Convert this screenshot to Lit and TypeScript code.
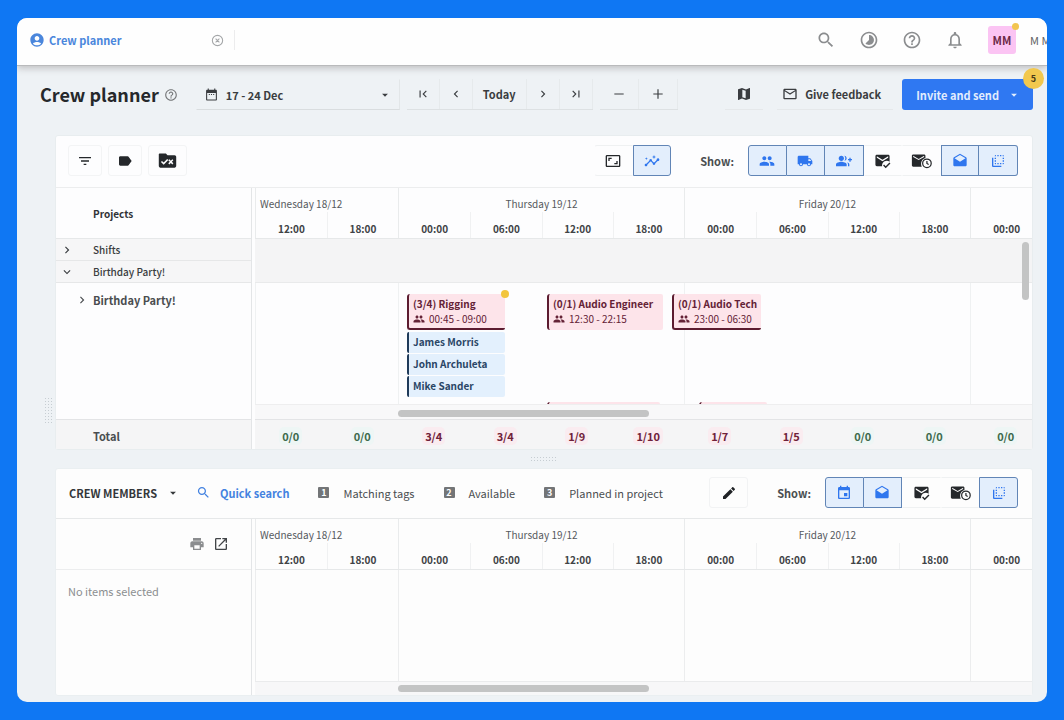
import { LitElement, html, css, svg, nothing } from "lit";
import { customElement, property, state } from "lit/decorators.js";
import { classMap } from "lit/directives/class-map.js";
import { styleMap } from "lit/directives/style-map.js";

/* 24-unit icon shapes, keyed by name */
const ICONS: Record<string, unknown> = {
  account: svg`<path d="M12 2C6.48 2 2 6.48 2 12s4.48 10 10 10 10-4.48 10-10S17.520 2 12 2zm0 4c1.930 0 3.500 1.570 3.500 3.500S13.930 13 12 13s-3.500-1.570-3.500-3.500S10.070 6 12 6zm0 14c-2.030 0-4.430-.82-6.140-2.880C7.550 15.800 9.680 15 12 15s4.450.8 6.140 2.120C16.430 19.180 14.030 20 12 20z"/>`,
  closeCircle: svg`<path fill="none" stroke="currentColor" stroke-width="2" d="M12 2.500a9.500 9.500 0 1 0 0 19a9.500 9.500 0 0 0 0-19zM8.500 8.500l7 7M15.500 8.500l-7 7"/>`,
  search: svg`<path d="M15.500 14h-.79l-.28-.27C15.410 12.590 16 11.110 16 9.500 16 5.910 13.090 3 9.500 3S3 5.910 3 9.500 5.910 16 9.500 16c1.610 0 3.090-.59 4.230-1.570l.27.28v.79l5 4.990L20.490 19l-4.990-5zm-6 0C7.010 14 5 11.990 5 9.500S7.010 5 9.500 5 14 7.010 14 9.500 11.990 14 9.500 14z"/>`,
  timelapse: svg`<path d="M16.240 7.760C15.070 6.590 13.540 6 12 6v6l-4.240 4.240c2.340 2.340 6.140 2.340 8.490 0 2.340-2.340 2.340-6.140-.01-8.480zM12 2C6.480 2 2 6.480 2 12s4.480 10 10 10 10-4.480 10-10S17.520 2 12 2zm0 18c-4.420 0-8-3.580-8-8s3.580-8 8-8 8 3.580 8 8-3.580 8-8 8z"/>`,
  help: svg`<path d="M11 18h2v-2h-2v2zm1-16C6.480 2 2 6.480 2 12s4.480 10 10 10 10-4.480 10-10S17.520 2 12 2zm0 18c-4.410 0-8-3.590-8-8s3.590-8 8-8 8 3.590 8 8-3.590 8-8 8zm0-14c-2.210 0-4 1.790-4 4h2c0-1.100.9-2 2-2s2 .9 2 2c0 2-3 1.750-3 5h2c0-2.250 3-2.500 3-5 0-2.210-1.790-4-4-4z"/>`,
  bell: svg`<path d="M12 22c1.100 0 2-.9 2-2h-4c0 1.100.9 2 2 2zm6-6v-5c0-3.070-1.630-5.640-4.500-6.320V4c0-.83-.67-1.500-1.500-1.500s-1.500.67-1.500 1.500v.68C7.640 5.360 6 7.920 6 11v5l-2 2v1h16v-1l-2-2zm-2 1H8v-6c0-2.480 1.510-4.500 4-4.500s4 2.020 4 4.500v6z"/>`,
  calendar: svg`<path d="M20 3h-1V1h-2v2H7V1H5v2H4c-1.100 0-2 .9-2 2v16c0 1.100.9 2 2 2h16c1.100 0 2-.9 2-2V5c0-1.100-.9-2-2-2zm0 18H4V9h16v12zM7 11h2v2H7zm4 0h2v2h-2zm4 0h2v2h-2z"/>`,
  caret: svg`<path d="M7 10l5 5 5-5z"/>`,
  first: svg`<path d="M18.410 16.590L13.820 12l4.590-4.590L17 6l-6 6 6 6zM6 6h2v12H6z"/>`,
  prev: svg`<path d="M15.410 7.410L14 6l-6 6 6 6 1.410-1.410L10.830 12z"/>`,
  next: svg`<path d="M10 6L8.590 7.410 13.170 12l-4.580 4.590L10 18l6-6z"/>`,
  last: svg`<path d="M5.590 7.410L10.180 12l-4.590 4.590L7 18l6-6-6-6zM16 6h2v12h-2z"/>`,
  down: svg`<path d="M16.590 8.590L12 13.170 7.410 8.590 6 10l6 6 6-6z"/>`,
  minus: svg`<path d="M4 11h16v2H4z"/>`,
  plus: svg`<path d="M20 13h-7v7h-2v-7H4v-2h7V4h2v7h7z"/>`,
  map: svg`<path fill-rule="evenodd" d="M20.500 3l-.16.030L15 5.100 9 3 3.360 4.900c-.21.070-.36.250-.36.480V20.500c0 .28.220.5.500.5l.16-.030L9 18.900l6 2.100 5.640-1.900c.21-.070.36-.25.36-.48V3.500c0-.28-.22-.5-.5-.5zM9.500 5.500l5 1.700v11.300l-5-1.700z"/>`,
  mail: svg`<path d="M22 6c0-1.100-.9-2-2-2H4c-1.100 0-2 .9-2 2v12c0 1.100.9 2 2 2h16c1.100 0 2-.9 2-2V6zm-2 0l-8 5-8-5h16zm0 12H4V8l8 5 8-5v10z"/>`,
  filter: svg`<path d="M10 18h4v-2h-4v2zM3 6v2h18V6H3zm3 7h12v-2H6v2z"/>`,
  tag: svg`<path d="M17.630 5.840C17.270 5.330 16.670 5 16 5L5 5.010C3.900 5.010 3 5.900 3 7v10c0 1.100.9 1.990 2 1.990L16 19c.67 0 1.270-.33 1.630-.84L22 12l-4.370-6.160z"/>`,
  folderCheck: svg`<path fill-rule="evenodd" d="M2 3h8l2 2.500h9c1.100 0 2 .9 2 2V19c0 1.100-.9 2-2 2H3c-1.100 0-2-.9-2-2V4c0-.6.400-1 1-1zM5 12.500l-1.300 1.300 3.500 3.500 5.800-5.800-1.400-1.400-4.400 4.400zM14.300 10.500l-1.300 1.300 1.900 1.900-1.900 1.900 1.300 1.300 1.900-1.900 1.900 1.900 1.300-1.300-1.900-1.900 1.900-1.900-1.300-1.300-1.900 1.900z"/>`,
  fit: svg`<path d="M19 12h-2v3h-3v2h5v-5zM7 9h3V7H5v5h2V9zm14-6H3c-1.100 0-2 .9-2 2v14c0 1.100.9 2 2 2h18c1.100 0 2-.9 2-2V5c0-1.100-.9-2-2-2zm0 16H3V5h18v14z"/>`,
  insights: svg`<path d="M21 8c-1.450 0-2.260 1.440-1.930 2.510l-3.550 3.560c-.3-.09-.74-.09-1.040 0l-2.550-2.550C12.270 10.450 11.460 9 10 9c-1.450 0-2.270 1.440-1.930 2.520l-4.560 4.550C2.440 15.740 1 16.550 1 18c0 1.100.9 2 2 2 1.450 0 2.260-1.440 1.930-2.510l4.550-4.560c.3.090.74.090 1.040 0l2.550 2.550C12.730 16.550 13.540 18 15 18c1.450 0 2.270-1.440 1.930-2.520l3.560-3.550C21.560 12.260 23 11.450 23 10c0-1.100-.9-2-2-2zM15 9l.94-2.070L18 6l-2.060-.93L15 3l-.92 2.070L12 6l2.080.93zM3.500 11L4 9l2-.5L4 8l-.5-2L3 8l-2 .5L3 9z"/>`,
  people: svg`<path d="M16 11c1.660 0 2.990-1.340 2.990-3S17.660 5 16 5s-3 1.340-3 3 1.340 3 3 3zm-8 0c1.660 0 2.990-1.340 2.990-3S9.660 5 8 5 5 6.340 5 8s1.340 3 3 3zm0 2c-2.330 0-7 1.170-7 3.500V19h14v-2.500C15 14.170 10.330 13 8 13zm8 0c-.29 0-.62.020-.97.050 1.160.84 1.970 1.970 1.970 3.450V19h6v-2.500c0-2.330-4.670-3.500-7-3.500z"/>`,
  truck: svg`<path d="M20 8h-3V4H3c-1.100 0-2 .9-2 2v11h2c0 1.660 1.340 3 3 3s3-1.340 3-3h6c0 1.660 1.340 3 3 3s3-1.340 3-3h2v-5l-3-4zM6 18.500c-.83 0-1.500-.67-1.500-1.500s.67-1.500 1.500-1.500 1.500.67 1.500 1.500-.67 1.500-1.500 1.500zm13.500-9l1.960 2.500H17V9.500h2.500zm-1.500 9c-.83 0-1.500-.67-1.500-1.500s.67-1.500 1.500-1.500 1.500.67 1.500 1.500-.67 1.500-1.500 1.500z"/>`,
  groupAdd: svg`<path d="M22 9V7h-2v2h-2v2h2v2h2v-2h2V9zM8 12c2.210 0 4-1.790 4-4s-1.790-4-4-4-4 1.790-4 4 1.790 4 4 4zm0 1c-2.670 0-8 1.340-8 4v3h16v-3c0-2.660-5.330-4-8-4zM12.510 4.050C13.430 5.110 14 6.490 14 8s-.57 2.890-1.490 3.950C14.470 11.700 16 10.040 16 8s-1.530-3.700-3.490-3.950zM16.530 13.830C17.420 14.660 18 15.700 18 17v3h2v-3c0-1.450-1.590-2.510-3.470-3.170z"/>`,
  mailCheck: svg`<path d="M20 4H4c-1.100 0-2 .9-2 2v12c0 1.100.9 2 2 2h7.500c-.5-3.500 2-7.500 6.500-7.500 1.500 0 2.900.4 4 1.200V6c0-1.100-.9-2-2-2zm0 4l-8 5-8-5V6l8 5 8-5v2z"/><path fill="none" stroke="currentColor" stroke-width="2" d="M13.500 18.500l3 3 6-6"/>`,
  mailClock: svg`<path d="M15 5H2.500C1.700 5 1 5.700 1 6.500v11c0 .8.700 1.500 1.500 1.500h9.800c-2-4.200.3-9.200 4.200-10V6.500c0-.8-.7-1.500-1.500-1.500zm-6.200 6.500L2.500 8V6.500l6.300 3.700 6.200-3.700V8z"/><path fill="none" stroke="currentColor" stroke-width="1.400" d="M18.200 10.300a4.900 4.900 0 1 0 0 9.800a4.900 4.900 0 0 0 0-9.800zM18.200 12.500v2.900l2 1.200"/>`,
  drafts: svg`<path d="M21.990 8c0-.72-.37-1.350-.94-1.700L12 1 2.950 6.300C2.380 6.650 2 7.280 2 8v10c0 1.100.9 2 2 2h16c1.100 0 2-.9 2-2l-.01-10zM12 13L3.740 7.840 12 3l8.260 4.840L12 13z"/>`,
  flip: svg`<path d="M9 7H7v2h2V7zm0 4H7v2h2v-2zm0-8c-1.110 0-2 .9-2 2h2V3zm4 12h-2v2h2v-2zm6-12v2h2c0-1.100-.9-2-2-2zm-6 0h-2v2h2V3zM9 17v-2H7c0 1.100.89 2 2 2zm10-4h2v-2h-2v2zm0-4h2V7h-2v2zm0 8c1.100 0 2-.9 2-2h-2v2zM5 7H3v12c0 1.100.89 2 2 2h12v-2H5V7zm10-2h2V3h-2v2zm0 12h2v-2h-2v2z"/>`,
  pencil: svg`<path d="M3 17.250V21h3.750L17.810 9.940l-3.750-3.750L3 17.250zM20.710 7.040c.39-.39.39-1.020 0-1.410l-2.340-2.340c-.39-.39-1.020-.39-1.410 0l-1.830 1.830 3.750 3.750 1.830-1.830z"/>`,
  event: svg`<path d="M17 12h-5v5h5v-5zM16 1v2H8V1H6v2H5c-1.110 0-1.990.9-1.990 2L3 19c0 1.100.89 2 2 2h14c1.100 0 2-.9 2-2V5c0-1.100-.9-2-2-2h-1V1h-2zm3 18H5V8h14v11z"/>`,
  print: svg`<path d="M19 8H5c-1.660 0-3 1.340-3 3v6h4v4h12v-4h4v-6c0-1.660-1.340-3-3-3zm-3 11H8v-5h8v5zm3-7c-.55 0-1-.45-1-1s.45-1 1-1 1 .45 1 1-.45 1-1 1zm-1-9H6v4h12V3z"/>`,
  open: svg`<path d="M19 19H5V5h7V3H5c-1.110 0-2 .9-2 2v14c0 1.100.89 2 2 2h14c1.100 0 2-.9 2-2v-7h-2v7zM14 3v2h3.590l-9.830 9.830 1.410 1.410L19 6.410V10h2V3h-7z"/>`,
};

const icon = (name: string, size = 16) =>
  svg`<svg class="icon" viewBox="0 0 24 24" width=${size} height=${size} aria-hidden="true">${ICONS[name]}</svg>`;

/* The timeline opens on Wednesday at noon; one six-hour slot is a quarter of a day. */
const DAY_WIDTH = 286;
const START_HOUR = 12;
const hourToX = (h: number) => Math.round(((h - START_HOUR) * DAY_WIDTH) / 24);

const DAYS = [
  { label: "Wednesday 18/12", half: true, hours: ["12:00", "18:00"] },
  { label: "Thursday 19/12", half: false, hours: ["00:00", "06:00", "12:00", "18:00"] },
  { label: "Friday 20/12", half: false, hours: ["00:00", "06:00", "12:00", "18:00"] },
  { label: "", half: false, hours: ["00:00"] },
];

interface Shift {
  title: string;
  time: string;
  from: number;
  to: number;
  row: number;
  closed?: boolean;
  flagged?: boolean;
  crew?: string[];
}

const SHIFTS: Shift[] = [
  { title: "(3/4) Rigging", time: "00:45 - 09:00", from: 24.75, to: 33, row: 0, closed: true, flagged: true, crew: ["James Morris", "John Archuleta", "Mike Sander"] },
  { title: "(0/1) Audio Engineer", time: "12:30 - 22:15", from: 36.5, to: 46.25, row: 0 },
  { title: "(0/1) Audio Tech", time: "23:00 - 06:30", from: 47, to: 54.5, row: 0, closed: true },
  { title: "", time: "", from: 36.5, to: 46, row: 1 },
  { title: "", time: "", from: 49.25, to: 55, row: 1 },
];

const TOTALS = ["0/0", "0/0", "3/4", "3/4", "1/9", "1/10", "1/7", "1/5", "0/0", "0/0", "0/0"];

const shared = css`
  * { box-sizing: border-box; }
  .icon { display: block; flex: none; fill: currentColor; }
  button, select {
    font: inherit;
    color: inherit;
    background: none;
    border: 0;
    padding: 0;
    margin: 0;
    border-radius: 0;
    white-space: nowrap;
  }
  button { cursor: pointer; display: flex; align-items: center; justify-content: center; }
  select { appearance: none; cursor: pointer; }
`;

@customElement("toggle-group")
class ToggleGroup extends LitElement {
  @property({ attribute: false }) items: { icon: string; label: string; on: boolean; size?: number }[] = [];

  static styles = [shared, css`
    :host { display: block; flex: none; }
    .group { display: grid; grid-auto-flow: column; grid-auto-columns: 1fr; height: 31px; }
    .toggle { border: 1px solid #eff1f2; border-left-color: transparent; border-right-color: transparent; color: #25282b; }
    .toggle.on { background: #e3eefc; border-color: #6185b6; color: #2f76ee; }
    .toggle.on + .toggle.on { border-left: 0; }
    .toggle:first-child { border-radius: 3px 0 0 3px; }
    .toggle:last-child { border-radius: 0 3px 3px 0; }
  `];

  render() {
    return html`<div class="group" role="group">
      ${this.items.map((it, i) => html`
        <button type="button" class=${classMap({ toggle: true, on: it.on })} aria-label=${it.label}
          aria-pressed=${it.on ? "true" : "false"}
          @click=${() => { this.items = this.items.map((o, j) => (j === i ? { ...o, on: !o.on } : o)); }}>
          ${icon(it.icon, it.size ?? 16)}
        </button>`)}
    </div>`;
  }
}

@customElement("time-header")
class TimeHeader extends LitElement {
  static styles = [shared, css`
    :host { display: block; overflow: hidden; height: 51px; border-bottom: 1px solid #e6e8e9; }
    .days { display: flex; }
    .day { flex: none; width: 286px; height: 51px; border-left: 1px solid #e9ebec; }
    .day.half { width: 143px; }
    .name { height: 24px; padding: 6px 4px 0; line-height: 20px; font-size: 10px; color: #55595d; text-align: center; }
    .half .name { text-align: left; }
    .hours { display: flex; }
    .hour { flex: none; width: 25%; height: 26px; line-height: 34px; font-size: 10px; font-weight: 700; color: #404346; text-align: center; }
    .half .hour { width: 50%; }
    .hour + .hour { border-left: 1px solid #f0f1f2; }
  `];

  render() {
    return html`<div class="days">
      ${DAYS.map((d) => html`<div class=${classMap({ day: true, half: d.half })}>
        <div class="name">${d.label}</div>
        <div class="hours">${d.hours.map((h) => html`<div class="hour">${h}</div>`)}</div>
      </div>`)}
    </div>`;
  }
}

@customElement("shift-card")
class ShiftCard extends LitElement {
  @property({ attribute: false }) shift!: Shift;

  static styles = [shared, css`
    :host { display: block; }
    .stack { display: flex; flex-direction: column; gap: 1px; }
    .card {
      position: relative;
      height: 36px;
      padding: 2px 0 0 4px;
      margin-bottom: 1px;
      background: #fde4ea;
      color: #642236;
      border-left: 2px solid #5c1c30;
      border-radius: 3px 2px 2px 3px;
      white-space: nowrap;
    }
    .card.closed { border-bottom: 2px solid #5c1c30; }
    .title { font-size: 10px; line-height: 16px; font-weight: 700; }
    .time { display: flex; align-items: center; gap: 4px; font-size: 10px; line-height: 14px; }
    .flag { position: absolute; top: -4px; right: -4px; width: 8px; height: 8px; border-radius: 4px; background: #f2c53d; }
    .member {
      height: 21px;
      padding-left: 4px;
      font-size: 10px;
      line-height: 20px;
      font-weight: 700;
      background: #e3f0fd;
      color: #2a4666;
      border-left: 2px solid #1f3a5a;
      border-radius: 2px;
      white-space: nowrap;
    }
  `];

  render() {
    const s = this.shift;
    return html`<div class="stack">
      <div class=${classMap({ card: true, closed: !!s.closed })}>
        ${s.title ? html`<div class="title">${s.title}</div>
          <div class="time">${icon("people", 12)}<span>${s.time}</span></div>` : nothing}
        ${s.flagged ? html`<span class="flag"></span>` : nothing}
      </div>
      ${(s.crew ?? []).map((name) => html`<div class="member">${name}</div>`)}
    </div>`;
  }
}

@customElement("project-board")
class ProjectBoard extends LitElement {
  @state() private open = true;

  static styles = [shared, css`
    :host { display: block; background: #fdfdfe; border: 1px solid #e8edef; border-radius: 3px; }
    .tools { display: flex; align-items: center; gap: 6px; height: 52px; padding: 0 14px 2px 12px; border-bottom: 1px solid #ecedee; }
    .tool { width: 34px; height: 31px; border: 1px solid #f3f4f5; border-radius: 3px; color: #25282b; }
    .tool.wide { width: 39px; }
    .fill { flex: 1; }
    .pair { width: 77px; }
    .views { width: 270px; }
    .show { font-size: 11px; font-weight: 700; color: #4a4d50; margin: 0 8px 0 23px; }
    .grid { display: grid; grid-template-columns: 196px minmax(0, 1fr); }
    .side { border-right: 1px solid #e3e5e7; }
    .lane { margin-left: 3px; min-width: 0; }
    .head { height: 51px; padding-left: 37px; line-height: 51px; font-size: 10px; font-weight: 700; color: #303336; border-bottom: 1px solid #e6e8e9; }
    .group { justify-content: flex-start; gap: 19px; width: 100%; height: 22px; padding-left: 4px; font-size: 10px; font-weight: 500; color: #3a3d40; background: #f6f6f7; border-bottom: 1px solid #e6e7e8; }
    .band { height: 44px; background: #f4f4f5; border-bottom: 1px solid #e9eaeb; }
    .project { justify-content: flex-start; gap: 4px; margin: 7px 0 0 19px; height: 20px; font-size: 11px; font-weight: 700; color: #4a4d50; }
    .canvas { position: relative; height: 121px; overflow: hidden; display: flex; }
    .stripe { flex: none; width: 286px; border-left: 1px solid #eff1f2; }
    .stripe.half { width: 143px; }
    .shift { position: absolute; }
    .bar { height: 15px; padding-top: 5px; background: #f8f8f9; border-top: 1px solid #eeeeef; }
    .thumb { height: 7px; border-radius: 4px; background: #c3c4c4; }
    .rows { position: relative; }
    .vthumb { position: absolute; top: 3px; right: 3px; width: 7px; height: 58px; border-radius: 4px; background: #c3c4c4; }
    .total { height: 30px; line-height: 32px; background: #f5f5f6; border-top: 1px solid #e3e4e6; font-size: 11px; font-weight: 700; color: #4a4d50; }
    .side.total { padding-left: 37px; }
    .sums { display: flex; overflow: hidden; }
    .sum { flex: none; width: calc(286px / 4); text-align: center; color: #3d6a4c; }
    .sum.short { color: #702139; }
    .sum > span { padding: 1px 3px; border-radius: 5px; background: #eef6f5; }
    .sum.short > span { background: #faecf0; }
  `];

  render() {
    return html`
      <div class="tools">
        <button type="button" class="tool" aria-label="Filter">${icon("filter", 16)}</button>
        <button type="button" class="tool" aria-label="Tags">${icon("tag", 16)}</button>
        <button type="button" class="tool wide" aria-label="Project status">${icon("folderCheck", 19)}</button>
        <span class="fill"></span>
        <toggle-group class="pair" .items=${[
          { icon: "fit", label: "Fit to screen", on: false },
          { icon: "insights", label: "Insights", on: true },
        ]}></toggle-group>
        <span class="show">Show:</span>
        <toggle-group class="views" .items=${[
          { icon: "people", label: "Crew", on: true },
          { icon: "truck", label: "Transport", on: true },
          { icon: "groupAdd", label: "Open positions", on: true },
          { icon: "mailCheck", label: "Confirmed invitations", on: false, size: 17 },
          { icon: "mailClock", label: "Pending invitations", on: false, size: 21 },
          { icon: "drafts", label: "Opened invitations", on: true },
          { icon: "flip", label: "Overlaps", on: true },
        ]}></toggle-group>
      </div>
      <div class="grid">
        <div class="side">
          <div class="head">Projects</div>
          <button type="button" class="group">${icon("next", 14)}Shifts</button>
          <button type="button" class="group" aria-expanded=${this.open ? "true" : "false"}
            @click=${() => { this.open = !this.open; }}>${icon(this.open ? "down" : "next", 14)}Birthday Party!</button>
          ${this.open ? html`<button type="button" class="project">${icon("next", 14)}Birthday Party!</button>` : nothing}
        </div>
        <div class="lane">
          <time-header></time-header>
          <div class="rows">
            <div class="band"></div>
            <div class="canvas">
              ${DAYS.map((d) => html`<div class=${classMap({ stripe: true, half: d.half })}></div>`)}
              ${this.open ? SHIFTS.map((s) => html`<shift-card class="shift" .shift=${s} style=${styleMap({
                left: `${hourToX(s.from)}px`,
                width: `${hourToX(s.to) - hourToX(s.from)}px`,
                top: `${11 + s.row * 108}px`,
              })}></shift-card>`) : nothing}
            </div>
            <div class="vthumb"></div>
          </div>
          <div class="bar"><div class="thumb" style=${styleMap({ marginLeft: `${hourToX(24)}px`, width: `${hourToX(33.1)}px` })}></div></div>
        </div>
        <div class="side total">Total</div>
        <div class="lane total sums">
          ${TOTALS.map((t) => html`<div class=${classMap({ sum: true, short: t !== "0/0" })}><span>${t}</span></div>`)}
        </div>
      </div>`;
  }
}

@customElement("crew-board")
class CrewBoard extends LitElement {
  static styles = [shared, css`
    :host { display: flex; flex-direction: column; background: #fdfdfd; border: 1px solid #eaeff1; border-radius: 3px; }
    .tools { display: flex; align-items: center; height: 50px; padding: 0 14px 2px 13px; border-bottom: 1px solid #e6e8e9; font-size: 11px; color: #4a4d50; white-space: nowrap; }
    .picker { display: flex; align-items: center; gap: 8px; margin-right: 16px; font-weight: 700; color: #34373a; }
    .quick { gap: 9px; margin-right: 29px; font-weight: 700; color: #4382e0; }
    .quickfilter { gap: 14px; margin-right: 29px; }
    .num { display: grid; place-items: center; width: 11px; height: 11px; border-radius: 1px; background: #737577; color: #fff; font-size: 9px; line-height: 11px; font-weight: 700; }
    .fill { flex: 1; }
    .edit { width: 39px; height: 31px; border: 1px solid #f2f3f4; border-radius: 3px; color: #202326; }
    .show { font-weight: 700; margin: 0 14px 0 29px; }
    .views { width: 193px; }
    .grid { flex: 1; display: grid; grid-template-columns: 196px minmax(0, 1fr); }
    .side { border-right: 1px solid #e3e5e7; }
    .actions { display: flex; align-items: center; justify-content: flex-end; gap: 8px; height: 51px; padding-right: 22px; border-bottom: 1px solid #ecedee; color: #424548; }
    .dim { color: #8b8d8f; }
    .empty { margin: 0; padding: 11px 12px; font-size: 11px; line-height: 20px; color: #8b8e90; }
    .lane { margin-left: 3px; min-width: 0; display: flex; flex-direction: column; }
    .canvas { flex: 1; display: flex; overflow: hidden; }
    .stripe { flex: none; width: 286px; border-left: 1px solid #ecedee; }
    .stripe.half { width: 143px; }
    .bar { height: 14px; padding-top: 3px; background: #f7f7f8; border-top: 1px solid #eaebec; }
    .thumb { height: 7px; border-radius: 4px; background: #c3c4c4; }
  `];

  render() {
    return html`
      <div class="tools">
        <span class="picker"><select aria-label="Resource type"><option>CREW MEMBERS</option></select>${icon("caret", 14)}</span>
        <button type="button" class="quick">${icon("search", 15)}Quick search</button>
        ${["Matching tags", "Available", "Planned in project"].map((t, i) => html`
          <button type="button" class="quickfilter"><span class="num">${i + 1}</span>${t}</button>`)}
        <span class="fill"></span>
        <button type="button" class="edit" aria-label="Edit">${icon("pencil", 16)}</button>
        <span class="show">Show:</span>
        <toggle-group class="views" .items=${[
          { icon: "event", label: "Appointments", on: true },
          { icon: "drafts", label: "Opened invitations", on: true },
          { icon: "mailCheck", label: "Confirmed invitations", on: false, size: 17 },
          { icon: "mailClock", label: "Pending invitations", on: false, size: 21 },
          { icon: "flip", label: "Overlaps", on: true },
        ]}></toggle-group>
      </div>
      <div class="grid">
        <div class="side">
          <div class="actions">
            <button type="button" class="dim" aria-label="Print">${icon("print", 16)}</button>
            <button type="button" aria-label="Open in new window">${icon("open", 16)}</button>
          </div>
          <p class="empty">No items selected</p>
        </div>
        <div class="lane">
          <time-header></time-header>
          <div class="canvas">
            ${DAYS.map((d) => html`<div class=${classMap({ stripe: true, half: d.half })}></div>`)}
          </div>
          <div class="bar"><div class="thumb" style=${styleMap({ marginLeft: `${hourToX(24)}px`, width: `${hourToX(33.1)}px` })}></div></div>
        </div>
      </div>`;
  }
}

@customElement("app-root")
class AppRoot extends LitElement {
  static styles = [shared, css`
    :host {
      display: flex;
      flex-direction: column;
      box-sizing: border-box;
      min-height: 100vh;
      padding: 18px 17px;
      background: #0f77f3;
      font-family: "Noto Sans CJK SC", "Noto Sans", sans-serif;
      font-size: 11px;
      color: #25282b;
    }
    .window { flex: 1; display: flex; flex-direction: column; overflow: hidden; border-radius: 10px; background: #eef2f5; }
    .topbar { position: relative; display: flex; align-items: center; height: 48px; padding-bottom: 3px; padding-left: 12px; background: #fefefe; border-bottom: 1px solid #b9babc; box-shadow: 0 2px 7px rgba(60, 50, 50, 0.28); overflow-x: clip; }
    .tab { display: flex; align-items: center; gap: 4px; font-weight: 700; color: #4a86dc; text-decoration: none; }
    .close { margin-left: 89px; color: #a5a7a9; }
    .divider { width: 1px; height: 20px; margin-left: 10px; background: #ececed; }
    .fill { flex: 1; }
    .system { display: flex; align-items: center; gap: 23px; color: #8b8d8f; }
    .avatar { position: relative; display: grid; place-items: center; width: 28px; height: 28px; margin-left: 23px; border-radius: 3px; background: #fbc4f3; color: #6a2846; font-weight: 700; }
    .ping { position: absolute; top: -3px; right: -3px; width: 7px; height: 7px; border-radius: 4px; background: #f2c550; }
    .user { width: 17px; margin-left: 14px; overflow: hidden; white-space: nowrap; color: #5e6164; }
    .header { display: flex; align-items: center; padding: 13px 14px 0 23px; color: #3a3d40; font-weight: 700; }
    h1 { margin: 0 5px 0 0; font-size: 18px; line-height: 31px; font-weight: 700; color: #25282b; white-space: nowrap; }
    .hint { color: #77797b; }
    .date { display: flex; align-items: center; width: 204px; height: 31px; margin-left: 18px; padding: 0 7px 0 8px; gap: 8px; border: 1px solid transparent; border-bottom-color: #d9dddf; border-right-color: #e2e6e8; }
    .date select { flex: 1; }
    .steps { display: flex; height: 31px; margin-left: 7px; border-bottom: 1px solid #dde1e3; }
    .steps button { width: 33px; border-right: 1px solid #e6eaec; }
    .steps .today { width: 54px; }
    .steps.zoom button { width: 39px; }
    .mapbtn { width: 38px; height: 31px; border-bottom: 1px solid #e5e8ea; }
    .feedback { gap: 7px; height: 31px; margin-left: 14px; padding: 0 12px 0 5px; border-bottom: 1px solid #e5e8ea; }
    .invite { position: relative; gap: 8px; height: 31px; margin-left: 9px; padding: 0 12px 0 14px; border-radius: 3px; background: #2f78f2; color: #e2edfd; }
    .count { position: absolute; top: -11px; right: -11px; width: 21px; height: 21px; border-radius: 11px; background: #f2c84e; color: #4a3a18; font-size: 9px; line-height: 21px; text-align: center; }
    .workspace { flex: 1; display: flex; padding: 25px 14px 6px 0; }
    .rail { display: flex; align-items: center; justify-content: flex-end; width: 38px; padding: 0 3px 10px 0; }
    .grip { width: 8px; height: 28px; background: radial-gradient(circle, #c6cdd2 1px, transparent 1px) 0 0 / 3px 3px; }
    .boards { flex: 1; min-width: 0; display: flex; flex-direction: column; }
    .split { display: flex; align-items: center; justify-content: center; height: 18px; }
    .grip.flat { width: 28px; height: 6px; }
    .crew { flex: 1; }
  `];

  render() {
    return html`
      <div class="window">
        <header class="topbar">
          <a class="tab" href="#crew-planner">${icon("account", 16)}Crew planner</a>
          <button type="button" class="close" aria-label="Close tab">${icon("closeCircle", 13)}</button>
          <span class="divider"></span>
          <span class="fill"></span>
          <div class="system">
            <button type="button" aria-label="Search">${icon("search", 20)}</button>
            <button type="button" aria-label="Time tracking">${icon("timelapse", 20)}</button>
            <button type="button" aria-label="Help">${icon("help", 20)}</button>
            <button type="button" aria-label="Notifications">${icon("bell", 20)}</button>
          </div>
          <div class="avatar">MM<span class="ping"></span></div>
          <div class="user">M M</div>
        </header>
        <div class="header">
          <h1>Crew planner</h1>
          <span class="hint">${icon("help", 14)}</span>
          <div class="date">${icon("calendar", 13)}<select aria-label="Period"><option>17 - 24 Dec</option></select>${icon("caret", 14)}</div>
          <div class="steps">
            <button type="button" aria-label="First">${icon("first", 14)}</button>
            <button type="button" aria-label="Previous">${icon("prev", 14)}</button>
            <button type="button" class="today">Today</button>
            <button type="button" aria-label="Next">${icon("next", 14)}</button>
            <button type="button" aria-label="Last">${icon("last", 14)}</button>
          </div>
          <div class="steps zoom">
            <button type="button" aria-label="Zoom out">${icon("minus", 14)}</button>
            <button type="button" aria-label="Zoom in">${icon("plus", 14)}</button>
          </div>
          <span class="fill"></span>
          <button type="button" class="mapbtn" aria-label="Map">${icon("map", 16)}</button>
          <button type="button" class="feedback">${icon("mail", 16)}Give feedback</button>
          <button type="button" class="invite">Invite and send${icon("caret", 14)}<span class="count">5</span></button>
        </div>
        <main class="workspace">
          <div class="rail"><span class="grip"></span></div>
          <div class="boards">
            <project-board></project-board>
            <div class="split"><span class="grip flat"></span></div>
            <crew-board class="crew"></crew-board>
          </div>
        </main>
      </div>`;
  }
}
